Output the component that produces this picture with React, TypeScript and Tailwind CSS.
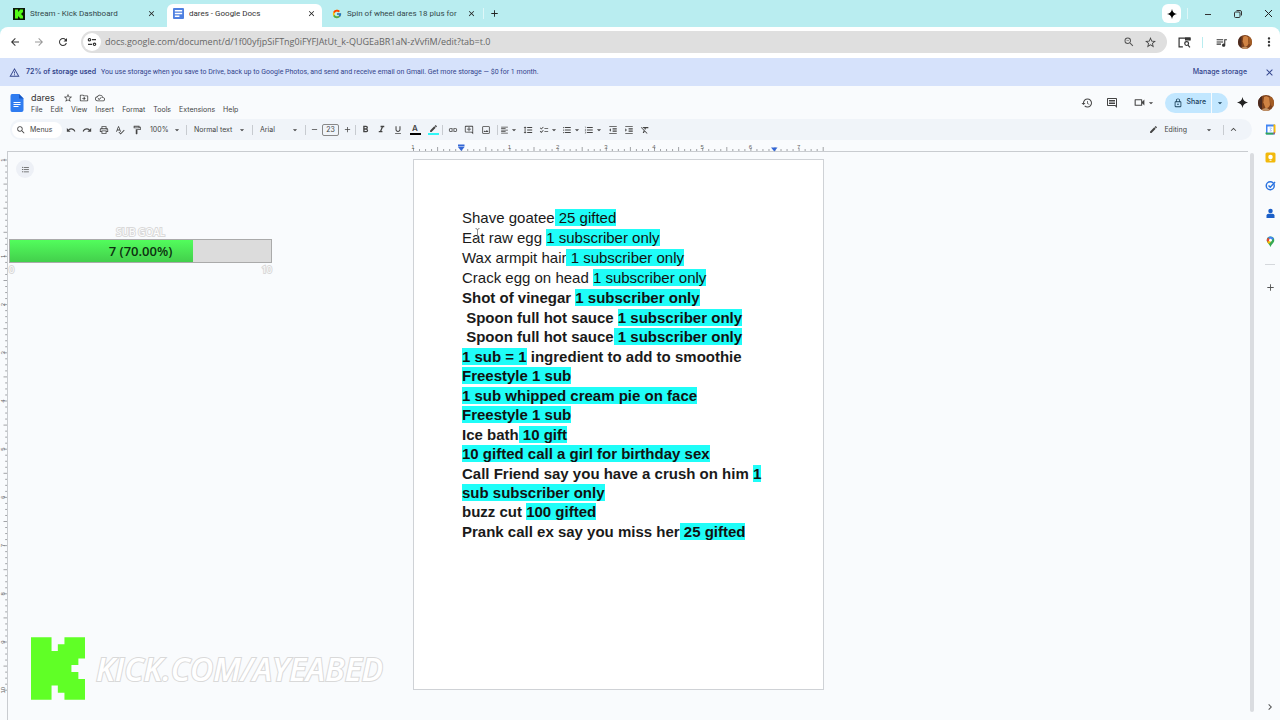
import type { ReactNode } from "react";
import {
  MdAdd, MdArrowBack, MdArrowDropDown, MdArrowForward, MdChecklist, MdChevronRight, MdClose,
  MdEdit, MdExpandLess, MdFormatAlignLeft, MdFormatBold, MdFormatIndentDecrease, MdFormatIndentIncrease,
  MdFormatItalic, MdFormatLineSpacing, MdFormatListBulleted, MdFormatListNumbered, MdFormatUnderlined, MdHistory,
  MdInsertLink, MdMoreVert, MdOutlineAddComment, MdOutlineCloudDone, MdOutlineInsertComment, MdOutlineDriveFileMove,
  MdOutlineFormatPaint, MdOutlineImage, MdOutlineLock, MdOutlinePrint, MdOutlineStarBorder, MdOutlineVideocam,
  MdOutlineWarningAmber, MdQueueMusic, MdRedo, MdRefresh, MdRemove, MdSearch, MdSpellcheck, MdUndo, MdZoomOut,
  MdFormatClear,
} from "react-icons/md";
import { FcGoogle } from "react-icons/fc";

const KICK_K = "M0 0H62V42H81V21H101V0H163V64H143V84H122V105H143V126H163V189H101V168H81V146H62V189H0Z";

function Spark({ className }: { className: string }) {
  return (
    <svg viewBox="0 0 24 24" className={className} fill="currentColor" aria-hidden="true">
      <path d="M12 0C13.2 7 17 10.800 24 12C17 13.200 13.200 17 12 24C10.800 17 7 13.200 0 12C7 10.800 10.800 7 12 0Z" />
    </svg>
  );
}

function Avatar({ className }: { className: string }) {
  return (
    <svg viewBox="0 0 24 24" className={className} role="img" aria-label="Account">
      <clipPath id="face"><circle cx="12" cy="12" r="12" /></clipPath>
      <g clipPath="url(#face)">
        <rect width="24" height="24" fill="#7d421d" />
        <rect x="0" width="6" height="24" fill="#4a2a20" />
        <path d="M9 3Q13 0 17 4L18 15Q15 22 11 19L8 11Z" fill="#d08343" />
        <path d="M17 3H24V19L19 15Z" fill="#a35c24" />
        <path d="M4 24Q9 18 14 20L20 24Z" fill="#c49468" />
      </g>
    </svg>
  );
}

function KickIcon() {
  return (
    <svg viewBox="0 0 24 24" className="size-3 shrink-0" aria-hidden="true">
      <rect width="24" height="24" fill="#0c1a0a" />
      <path d={KICK_K} transform="translate(4 3) scale(.098 .096)" fill="#53fc18" />
    </svg>
  );
}

function DocsFavicon() {
  return (
    <svg viewBox="0 0 24 24" className="size-[11px] shrink-0" aria-hidden="true">
      <rect width="24" height="24" rx="2" fill="#4f80e1" />
      <path d="M4 6H20M4 12H20M4 18H14" stroke="#fff" strokeWidth="3" />
    </svg>
  );
}

function Tab({ icon, title, active, width }: { icon: ReactNode; title: string; active?: boolean; width: string }) {
  return (
    <div className={`flex h-[23px] items-center gap-[5px] pb-[4px] pl-[6px] pr-[6px] ${width} ${active ? "rounded-t-md bg-white text-[#333]" : "text-[#33484b]"}`}>
      {icon}
      <span className="min-w-0 flex-1 overflow-hidden whitespace-nowrap text-[8px] leading-3">{title}</span>
      <button aria-label={`Close ${title}`} className="text-[#222]"><MdClose className="size-[9px]" /></button>
    </div>
  );
}

function Tool({ label, children, width = "w-4" }: { label: string; children: ReactNode; width?: string }) {
  return (
    <button aria-label={label} className={`flex h-4 shrink-0 items-center justify-center ${width}`}>
      {children}
    </button>
  );
}

const Divider = () => <span className="h-[10px] w-px shrink-0 bg-[#c7cbd0]" />;
const Caret = () => <MdArrowDropDown className="size-[10px] shrink-0" />;
const icon = "size-[11px] shrink-0";

function TabStrip() {
  return (
    <div className="flex h-[27px] items-center bg-[#b9edf0] font-['Roboto',sans-serif]">
      <div className="flex items-end self-end">
        <Tab width="w-[155px] ml-[7px]" icon={<KickIcon />} title="Stream - Kick Dashboard" />
        <Tab width="w-[155px] ml-[5px]" active icon={<DocsFavicon />} title="dares - Google Docs" />
        <Tab width="w-[156px] ml-1" icon={<FcGoogle className="size-[10px] shrink-0" />} title="Spin of wheel dares 18 plus for" />
      </div>
      <span className="ml-px h-[11px] w-px bg-[#def7f8]" />
      <button aria-label="New tab" className="ml-[5px] text-[#222]"><MdAdd className="size-[11px]" /></button>
      <div className="ml-auto flex items-center text-[#222]">
        <button aria-label="Assistant" className="flex size-[19px] items-center justify-center rounded-md bg-white text-black">
          <Spark className="size-[10px]" />
        </button>
        <span className="ml-[6px] h-[11px] w-px bg-[#def7f8]" />
        <button aria-label="Minimize" className="ml-4"><svg viewBox="0 0 8 8" className="size-2"><path d="M1 4.500H7" stroke="#333" /></svg></button>
        <button aria-label="Restore" className="ml-[22px]">
          <svg viewBox="0 0 8 8" className="size-2" fill="none" stroke="#333">
            <rect x=".5" y="2" width="5.500" height="5.500" rx="1" /><path d="M2.500 .5H6Q7.500 .5 7.500 2V5.500" />
          </svg>
        </button>
        <button aria-label="Close window" className="ml-[22px] mr-[7px]">
          <svg viewBox="0 0 9 9" className="size-[9px]" stroke="#222"><path d="M1 1L8 8M8 1L1 8" /></svg>
        </button>
      </div>
    </div>
  );
}

function AddressBar() {
  return (
    <div className="bg-[#b9edf0]">
      <div className="flex h-[31px] items-center rounded-t-lg bg-white pb-px pl-[9px] pr-1 text-[#333]">
        <button aria-label="Back"><MdArrowBack className="size-3" /></button>
        <button aria-label="Forward" className="ml-3 text-[#999]"><MdArrowForward className="size-3" /></button>
        <button aria-label="Reload" className="ml-3"><MdRefresh className="size-3" /></button>
        <div className="ml-3 flex h-[22px] flex-1 items-center rounded-full bg-[#dfdfdf] pr-[10px]">
          <button aria-label="Site information" className="ml-[2px] flex size-[18px] items-center justify-center rounded-full bg-white">
            <svg viewBox="0 0 10 10" className="size-[10px]" fill="none" stroke="#333" strokeWidth="1.200">
              <circle cx="2.500" cy="2.700" r="1.200" /><path d="M5 2.700H9M1 7.300H5" /><circle cx="7.500" cy="7.300" r="1.200" />
            </svg>
          </button>
          <input aria-label="Address" readOnly defaultValue="docs.google.com/document/d/1f00yfjpSiFTng0iFYFJAtUt_k-QUGEaBR1aN-zVvfiM/edit?tab=t.0"
            className="ml-[4px] min-w-0 flex-1 bg-transparent text-[9px] leading-4 text-[#666] outline-none" />
          <button aria-label="Zoom" className="text-[#555]"><MdZoomOut className="size-3" /></button>
          <button aria-label="Bookmark" className="ml-[9px] text-[#444]"><MdOutlineStarBorder className="size-[13px]" /></button>
        </div>
        <button aria-label="Search side panel" className="ml-[11px]">
          <svg viewBox="0 0 24 20" className="h-[11px] w-[13px]" fill="none" stroke="#333" strokeWidth="2.200">
            <path d="M9 18H2V2H22V6" /><path d="M14 2H22V5H14Z" fill="#333" /><circle cx="16" cy="12" r="3.500" /><path d="M18.500 15L22 19" />
          </svg>
        </button>
        <span className="ml-[11px] h-[11px] w-px bg-[#b9edf0]" />
        <button aria-label="Media" className="ml-3"><MdQueueMusic className="size-[13px]" /></button>
        <button aria-label="Profile" className="ml-[10px]"><Avatar className="size-[14px]" /></button>
        <button aria-label="Browser menu" className="ml-[10px]"><MdMoreVert className="size-[14px]" /></button>
      </div>
    </div>
  );
}

function StorageBanner() {
  return (
    <div className="flex h-7 items-center bg-[#d6e2fb] pl-[9px] pr-[5px] font-['Roboto',sans-serif] text-[7px] leading-3 text-[#33458c]">
      <MdOutlineWarningAmber className="size-[11px]" />
      <strong className="ml-[6px] font-['Inter',sans-serif] font-semibold">72% of storage used</strong>
      <span className="ml-[5px]">You use storage when you save to Drive, back up to Google Photos, and send and receive email on Gmail. Get more storage — $0 for 1 month.</span>
      <a href="#storage" className="ml-auto font-['Inter',sans-serif] font-medium">Manage storage</a>
      <button aria-label="Dismiss" className="ml-[17px]"><MdClose className="size-[11px]" /></button>
    </div>
  );
}

const MENUS = ["File", "Edit", "View", "Insert", "Format", "Tools", "Extensions", "Help"];

function DocHeader() {
  return (
    <header className="flex h-[33px] items-center pl-[10px] pr-[6px] text-[#444]">
      <svg viewBox="0 0 14 18" className="h-[18px] w-[14px]" aria-hidden="true">
        <path d="M2 0H9L13.500 4.500V16Q13.500 18 11.500 18H2Q.5 18 .5 16V2Q.5 0 2 0Z" fill="#2f7cf0" />
        <path d="M9 0L13.500 4.500H9Z" fill="#1757c2" />
        <path d="M3.500 8.500H10.500M3.500 10.500H10.500M3.500 12.500H8.500" stroke="#fff" />
      </svg>
      <div className="ml-[7px] flex flex-col pt-[2px]">
        <div className="flex items-center">
          <h1 className="text-[9px] leading-3 text-[#333]">dares</h1>
          <button aria-label="Star" className="ml-[8px]"><MdOutlineStarBorder className="size-[10px]" /></button>
          <button aria-label="Move" className="ml-[6px]"><MdOutlineDriveFileMove className="size-[10px]" /></button>
          <button aria-label="Saved to Drive" className="ml-[6px]"><MdOutlineCloudDone className="size-[10px]" /></button>
        </div>
        <nav className="flex gap-2 text-[7px] leading-3">
          {MENUS.map((m) => <button key={m}>{m}</button>)}
        </nav>
      </div>
      <div className="ml-auto flex items-center">
        <button aria-label="History"><MdHistory className="size-3" /></button>
        <button aria-label="Comments" className="ml-[13px]"><MdOutlineInsertComment className="size-3" /></button>
        <button aria-label="Meet" className="ml-[15px] flex items-center"><MdOutlineVideocam className="size-[13px]" /><Caret /></button>
        <div className="ml-[9px] flex h-5 items-center rounded-full bg-[#c2e7ff] text-[#19405a]">
          <button className="flex h-full items-center gap-[4px] pl-2 pr-[5px] text-[7px] font-medium"><MdOutlineLock className="size-[10px]" />Share</button>
          <span className="h-full w-px bg-[#f9fbfd]" />
          <button aria-label="Share options" className="flex h-full w-4 items-center justify-center"><Caret /></button>
        </div>
        <button aria-label="Gemini" className="ml-[9px] text-[#222]"><Spark className="size-[11px]" /></button>
        <button aria-label="Google account" className="ml-[10px]"><Avatar className="size-4" /></button>
      </div>
    </header>
  );
}

function Toolbar() {
  return (
    <div className="ml-[10px] mr-2 flex h-[21px] items-center rounded-full bg-[#f0f4f9] pl-[2px] pr-[13px] text-[7px] leading-3 text-[#444]">
      <button className="flex h-4 w-[50px] items-center gap-[4px] rounded-full bg-white pl-1"><MdSearch className="size-[10px]" />Menus</button>
      <div className="ml-px flex">
        <Tool label="Undo"><MdUndo className="size-[10px]" /></Tool>
        <Tool label="Redo"><MdRedo className="size-[10px]" /></Tool>
        <Tool label="Print" width="w-[17px]"><MdOutlinePrint className="size-[10px]" /></Tool>
        <Tool label="Spelling"><MdSpellcheck className="size-[10px]" /></Tool>
        <Tool label="Paint format" width="w-[17px]"><MdOutlineFormatPaint className="size-[10px]" /></Tool>
      </div>
      <button className="ml-[5px] flex w-[36px] items-center justify-between pr-[4px]">100%<Caret /></button>
      <Divider />
      <button className="ml-[7px] flex w-[58px] items-center justify-between pr-[5px]">Normal text<Caret /></button>
      <Divider />
      <button className="ml-[7px] flex w-[45px] items-center justify-between pr-[5px]">Arial<Caret /></button>
      <Divider />
      <Tool label="Decrease font size"><MdRemove className="size-[9px]" /></Tool>
      <input aria-label="Font size" defaultValue="23" className="h-3 w-[17px] rounded-xs border border-[#888] bg-transparent text-center text-[7px] leading-3 outline-none" />
      <Tool label="Increase font size"><MdAdd className="size-[9px]" /></Tool>
      <Divider />
      <div className="ml-px flex">
        <Tool label="Bold"><MdFormatBold className={icon} /></Tool>
        <Tool label="Italic" width="w-[17px]"><MdFormatItalic className={icon} /></Tool>
        <Tool label="Underline"><MdFormatUnderlined className="size-[10px]" /></Tool>
        <Tool label="Text color" width="w-[18px]">
          <span className="flex w-[11px] flex-col items-center border-b-2 border-black text-[8px] font-semibold leading-[9px]">A</span>
        </Tool>
        <Tool label="Highlight color" width="w-[18px]">
          <span className="flex w-[11px] flex-col items-center border-b-2 border-[#2ff5f5]"><MdEdit className="size-[9px]" /></span>
        </Tool>
      </div>
      <Divider />
      <div className="ml-px flex">
        <Tool label="Insert link" width="w-[17px]"><MdInsertLink className="size-[10px]" /></Tool>
        <Tool label="Add comment"><MdOutlineAddComment className="size-[10px]" /></Tool>
        <Tool label="Insert image" width="w-[17px]"><MdOutlineImage className="size-[10px]" /></Tool>
      </div>
      <span className="w-[3px]" />
      <Divider />
      <div className="ml-[2px] flex">
        <Tool label="Align" width="w-[19px]"><MdFormatAlignLeft className="size-[10px]" /><Caret /></Tool>
        <Tool label="Line spacing" width="w-[18px]"><MdFormatLineSpacing className="size-[10px]" /></Tool>
        <Tool label="Checklist" width="w-[23px]"><MdChecklist className="size-[10px]" /><Caret /></Tool>
        <Tool label="Bulleted list" width="w-[23px]"><MdFormatListBulleted className="size-[10px]" /><Caret /></Tool>
        <Tool label="Numbered list" width="w-[22px]"><MdFormatListNumbered className="size-[10px]" /><Caret /></Tool>
        <Tool label="Decrease indent"><MdFormatIndentDecrease className="size-[10px]" /></Tool>
        <Tool label="Increase indent"><MdFormatIndentIncrease className="size-[10px]" /></Tool>
        <Tool label="Clear formatting"><MdFormatClear className="size-[10px]" /></Tool>
      </div>
      <button className="ml-auto flex items-center gap-[6px]"><MdEdit className="size-[9px]" />Editing<span className="ml-[11px]"><Caret /></span></button>
      <span className="ml-[9px] h-[10px] w-px bg-[#c7cbd0]" />
      <button aria-label="Hide menus" className="ml-1"><MdExpandLess className="size-[11px]" /></button>
    </div>
  );
}

const INCH = 48.2;

function HorizontalRuler() {
  const ticks = Array.from({ length: 69 }, (_, i) => i);
  return (
    <svg viewBox="0 0 410 11" className="h-[11px] w-[410px] overflow-visible font-['Liberation_Sans',sans-serif]" aria-hidden="true">
      {ticks.map((i) => (
        <path key={i} d={`M${(i * INCH) / 8 + 0.5} 11V${i % 8 === 0 ? 8 : i % 4 === 0 ? 7 : 9}`} stroke="#8a8d91" strokeWidth=".8" />
      ))}
      {[-1, 1, 2, 3, 4, 5, 6, 7].map((n) => (
        <text key={n} x={(n + 1) * INCH} y="9" fontSize="6" textAnchor="middle" fill="#666">{Math.abs(n)}</text>
      ))}
      <path d="M45 4.500H51.500V6.500H45ZM45 7H51.500L48.250 11Z" fill="#3367d6" />
      <path d="M358 7.500H364.500L361.250 11.500Z" fill="#3367d6" />
    </svg>
  );
}

function VerticalRuler() {
  const ticks = Array.from({ length: 89 }, (_, i) => i);
  return (
    <svg viewBox="0 0 7 568" className="h-[568px] w-[7px] overflow-visible font-['Liberation_Sans',sans-serif]" aria-hidden="true">
      {ticks.map((i) => (
        <path key={i} d={`M7 ${8 + (i * INCH) / 8}H${i % 4 === 0 ? 3.5 : 5.2}`} stroke="#8a8d91" strokeWidth=".8" />
      ))}
      {[-1, 1, 2, 3, 4, 5, 6, 7, 8, 9, 10].map((n) => (
        <text key={n} transform={`translate(5 ${8 + (n + 1) * INCH}) rotate(-90)`} fontSize="6" textAnchor="middle" fill="#666">{Math.abs(n)}</text>
      ))}
    </svg>
  );
}

const Hl = ({ children }: { children: ReactNode }) => <mark className="bg-[#1ffdf8] text-[#111]">{children}</mark>;

function DocPage() {
  return (
    <article className="relative min-h-[531px] w-[411px] shrink-0 self-start border border-[#cfd2d6] bg-white pb-12 pl-12 pr-11 pt-12 font-['Liberation_Sans',sans-serif] text-[15px] text-[#1a1a1a]">
      <div className="leading-5">
        <p>Shave goatee<Hl> 25 gifted</Hl></p>
        <p>Eat raw egg <Hl>1 subscriber only</Hl></p>
        <p>Wax armpit hair<Hl> 1 subscriber only</Hl></p>
        <p>Crack egg on head <Hl>1 subscriber only</Hl></p>
      </div>
      <div className="font-bold *:leading-[19px] *:odd:leading-5">
        <p>Shot of vinegar <Hl>1 subscriber only</Hl></p>
        <p>&nbsp;Spoon full hot sauce <Hl>1 subscriber only</Hl></p>
        <p>&nbsp;Spoon full hot sauce<Hl> 1 subscriber only</Hl></p>
        <p><Hl>1 sub = 1</Hl> ingredient to add to smoothie</p>
        <p><Hl>Freestyle 1 sub</Hl></p>
        <p><Hl>1 sub whipped cream pie on face</Hl></p>
        <p><Hl>Freestyle 1 sub</Hl></p>
        <p>Ice bath<Hl> 10 gift</Hl></p>
        <p><Hl>10 gifted call a girl for birthday sex</Hl></p>
        <p>Call Friend say you have a crush on him <Hl>1</Hl> <Hl>sub subscriber only</Hl></p>
        <p>buzz cut <Hl>100 gifted</Hl></p>
        <p>Prank call ex say you miss her<Hl> 25 gifted</Hl></p>
      </div>
      <svg viewBox="0 0 5 12" className="absolute left-[61px] top-[68px] h-3 w-[5px]" fill="none" stroke="#777" strokeWidth=".8" aria-hidden="true">
        <path d="M.5 .5Q2.500 .5 2.500 2Q2.500 .5 4.500 .5M2.500 2V10M.5 11.500Q2.500 11.500 2.500 10Q2.500 11.500 4.500 11.500" />
      </svg>
    </article>
  );
}

const outlined = "text-white [paint-order:stroke_fill] [-webkit-text-stroke:2px_#d9d9d9]";

function SubGoal() {
  return (
    <section aria-label="Sub goal" className="absolute left-[9px] top-[73px] w-[263px] font-['Open_Sans',sans-serif]">
      <div className={`text-center text-[10px] leading-[14px] ${outlined}`}>SUB GOAL</div>
      <div className="relative h-6 border border-[#aaa] bg-[#dcdcdc]">
        <div className="h-full w-[70%] bg-linear-to-b from-[#52fd5c] to-[#43cf4c]" />
        <span className="absolute inset-0 text-center text-[13px] font-semibold leading-[23px] text-[#0d3010]">7 (70.00%)</span>
      </div>
      <div className={`flex justify-between text-[9px] leading-[14px] ${outlined}`}><span>0</span><span>10</span></div>
    </section>
  );
}

function KickBanner() {
  return (
    <section className="absolute bottom-5 left-[31px] flex items-center gap-[11px]">
      <svg viewBox="0 0 163 189" className="h-[63px] w-[54px]" role="img" aria-label="Kick"><path d={KICK_K} fill="#60ff26" /></svg>
      <span className={`whitespace-nowrap font-['Open_Sans',sans-serif] text-[32px] font-semibold italic leading-9 ${outlined}`}>KICK.COM/AYEABED</span>
    </section>
  );
}

function SidePanel() {
  return (
    <aside className="flex w-[20px] shrink-0 flex-col items-center gap-[17px] pb-[7px] pt-[5px] text-[#555]">
      <button aria-label="Calendar">
        <svg viewBox="0 0 22 22" className="size-[11px]">
          <path d="M2 1H20V21H2Z" fill="#4285f4" /><path d="M17 1H20Q21 1 21 2V17H17Z" fill="#fbbc04" /><path d="M1 17H17V21H3Q1 21 1 19Z" fill="#34a853" />
          <path d="M17 17H21L17 21Z" fill="#ea4335" /><rect x="5" y="5" width="12" height="12" fill="#fff" /><path d="M9 8H13L11 11L13 14H9" fill="none" stroke="#8ab4f8" strokeWidth="1.500" />
        </svg>
      </button>
      <button aria-label="Keep">
        <svg viewBox="0 0 22 22" className="size-[11px]"><rect x="1" y="1" width="20" height="20" rx="3" fill="#f2b90c" /><circle cx="11" cy="10" r="4.500" fill="#fff" /><path d="M9 15.500H13V17.500H9Z" fill="#fff" /></svg>
      </button>
      <button aria-label="Tasks">
        <svg viewBox="0 0 22 22" className="size-[11px]" fill="none" stroke="#2a73e0" strokeWidth="3"><circle cx="10.500" cy="11.500" r="8" /><path d="M7 11L10.500 14.500L20 4" /></svg>
      </button>
      <button aria-label="Contacts">
        <svg viewBox="0 0 22 22" className="size-[11px]" fill="#1b5fc8"><circle cx="11" cy="6" r="4.500" /><path d="M3 20V15Q3 11.500 7 11.500H15Q19 11.500 19 15V20Z" /></svg>
      </button>
      <button aria-label="Maps">
        <svg viewBox="0 0 22 22" className="size-[11px]">
          <path d="M11 1A7.500 7.500 0 0 1 18.500 8.500C18.500 14 13 16 11 22C9 16 3.500 14 3.500 8.500A7.500 7.500 0 0 1 11 1Z" fill="#34a853" />
          <path d="M11 1A7.500 7.500 0 0 1 18 6L11 8.500L6 3Q8 1 11 1Z" fill="#4285f4" /><path d="M6 3L11 8.500L4.500 12Q2 7 6 3Z" fill="#ea4335" />
          <path d="M4.500 12L9 9L12 12L7.500 16Z" fill="#fbbc04" /><circle cx="11" cy="8.500" r="2.800" fill="#fff" />
        </svg>
      </button>
      <span className="h-px w-[10px] bg-[#d5d8dc]" />
      <button aria-label="Get add-ons"><MdAdd className="size-[11px]" /></button>
      <button aria-label="Hide side panel" className="mt-auto"><MdChevronRight className="size-3" /></button>
    </aside>
  );
}

export default function App() {
  return (
    <div className="flex h-screen min-h-[700px] flex-col overflow-hidden bg-[#f9fbfd] font-['Open_Sans',sans-serif]">
      <TabStrip />
      <AddressBar />
      <StorageBanner />
      <div className="flex min-h-0 flex-1 flex-col font-['Inter',sans-serif]">
        <DocHeader />
        <div className="flex min-h-0 flex-1">
          <main className="flex min-w-0 flex-1 flex-col">
            <Toolbar />
            <div className="ml-[7px] mr-3 flex h-3 shrink-0 justify-center border-b border-[#c9ccd0] pr-[20px]">
              <HorizontalRuler />
            </div>
            <div className="relative flex min-h-0 flex-1">
              <div className="w-2 shrink-0 overflow-hidden border-r border-[#c9ccd0]"><VerticalRuler /></div>
              <div className="flex min-w-0 flex-1 justify-center overflow-hidden pr-[21px] pt-[7px]"><DocPage /></div>
              <div className="mb-2 mr-[6px] mt-px w-1 shrink-0 rounded-full bg-[#dadce0]" />
              <button aria-label="Show outline" className="absolute left-4 top-2 flex size-[18px] items-center justify-center rounded-full bg-[#edf0f6] text-[#555]">
                <MdFormatListBulleted className="size-[9px]" />
              </button>
              <SubGoal />
              <KickBanner />
            </div>
          </main>
          <SidePanel />
        </div>
      </div>
    </div>
  );
}
